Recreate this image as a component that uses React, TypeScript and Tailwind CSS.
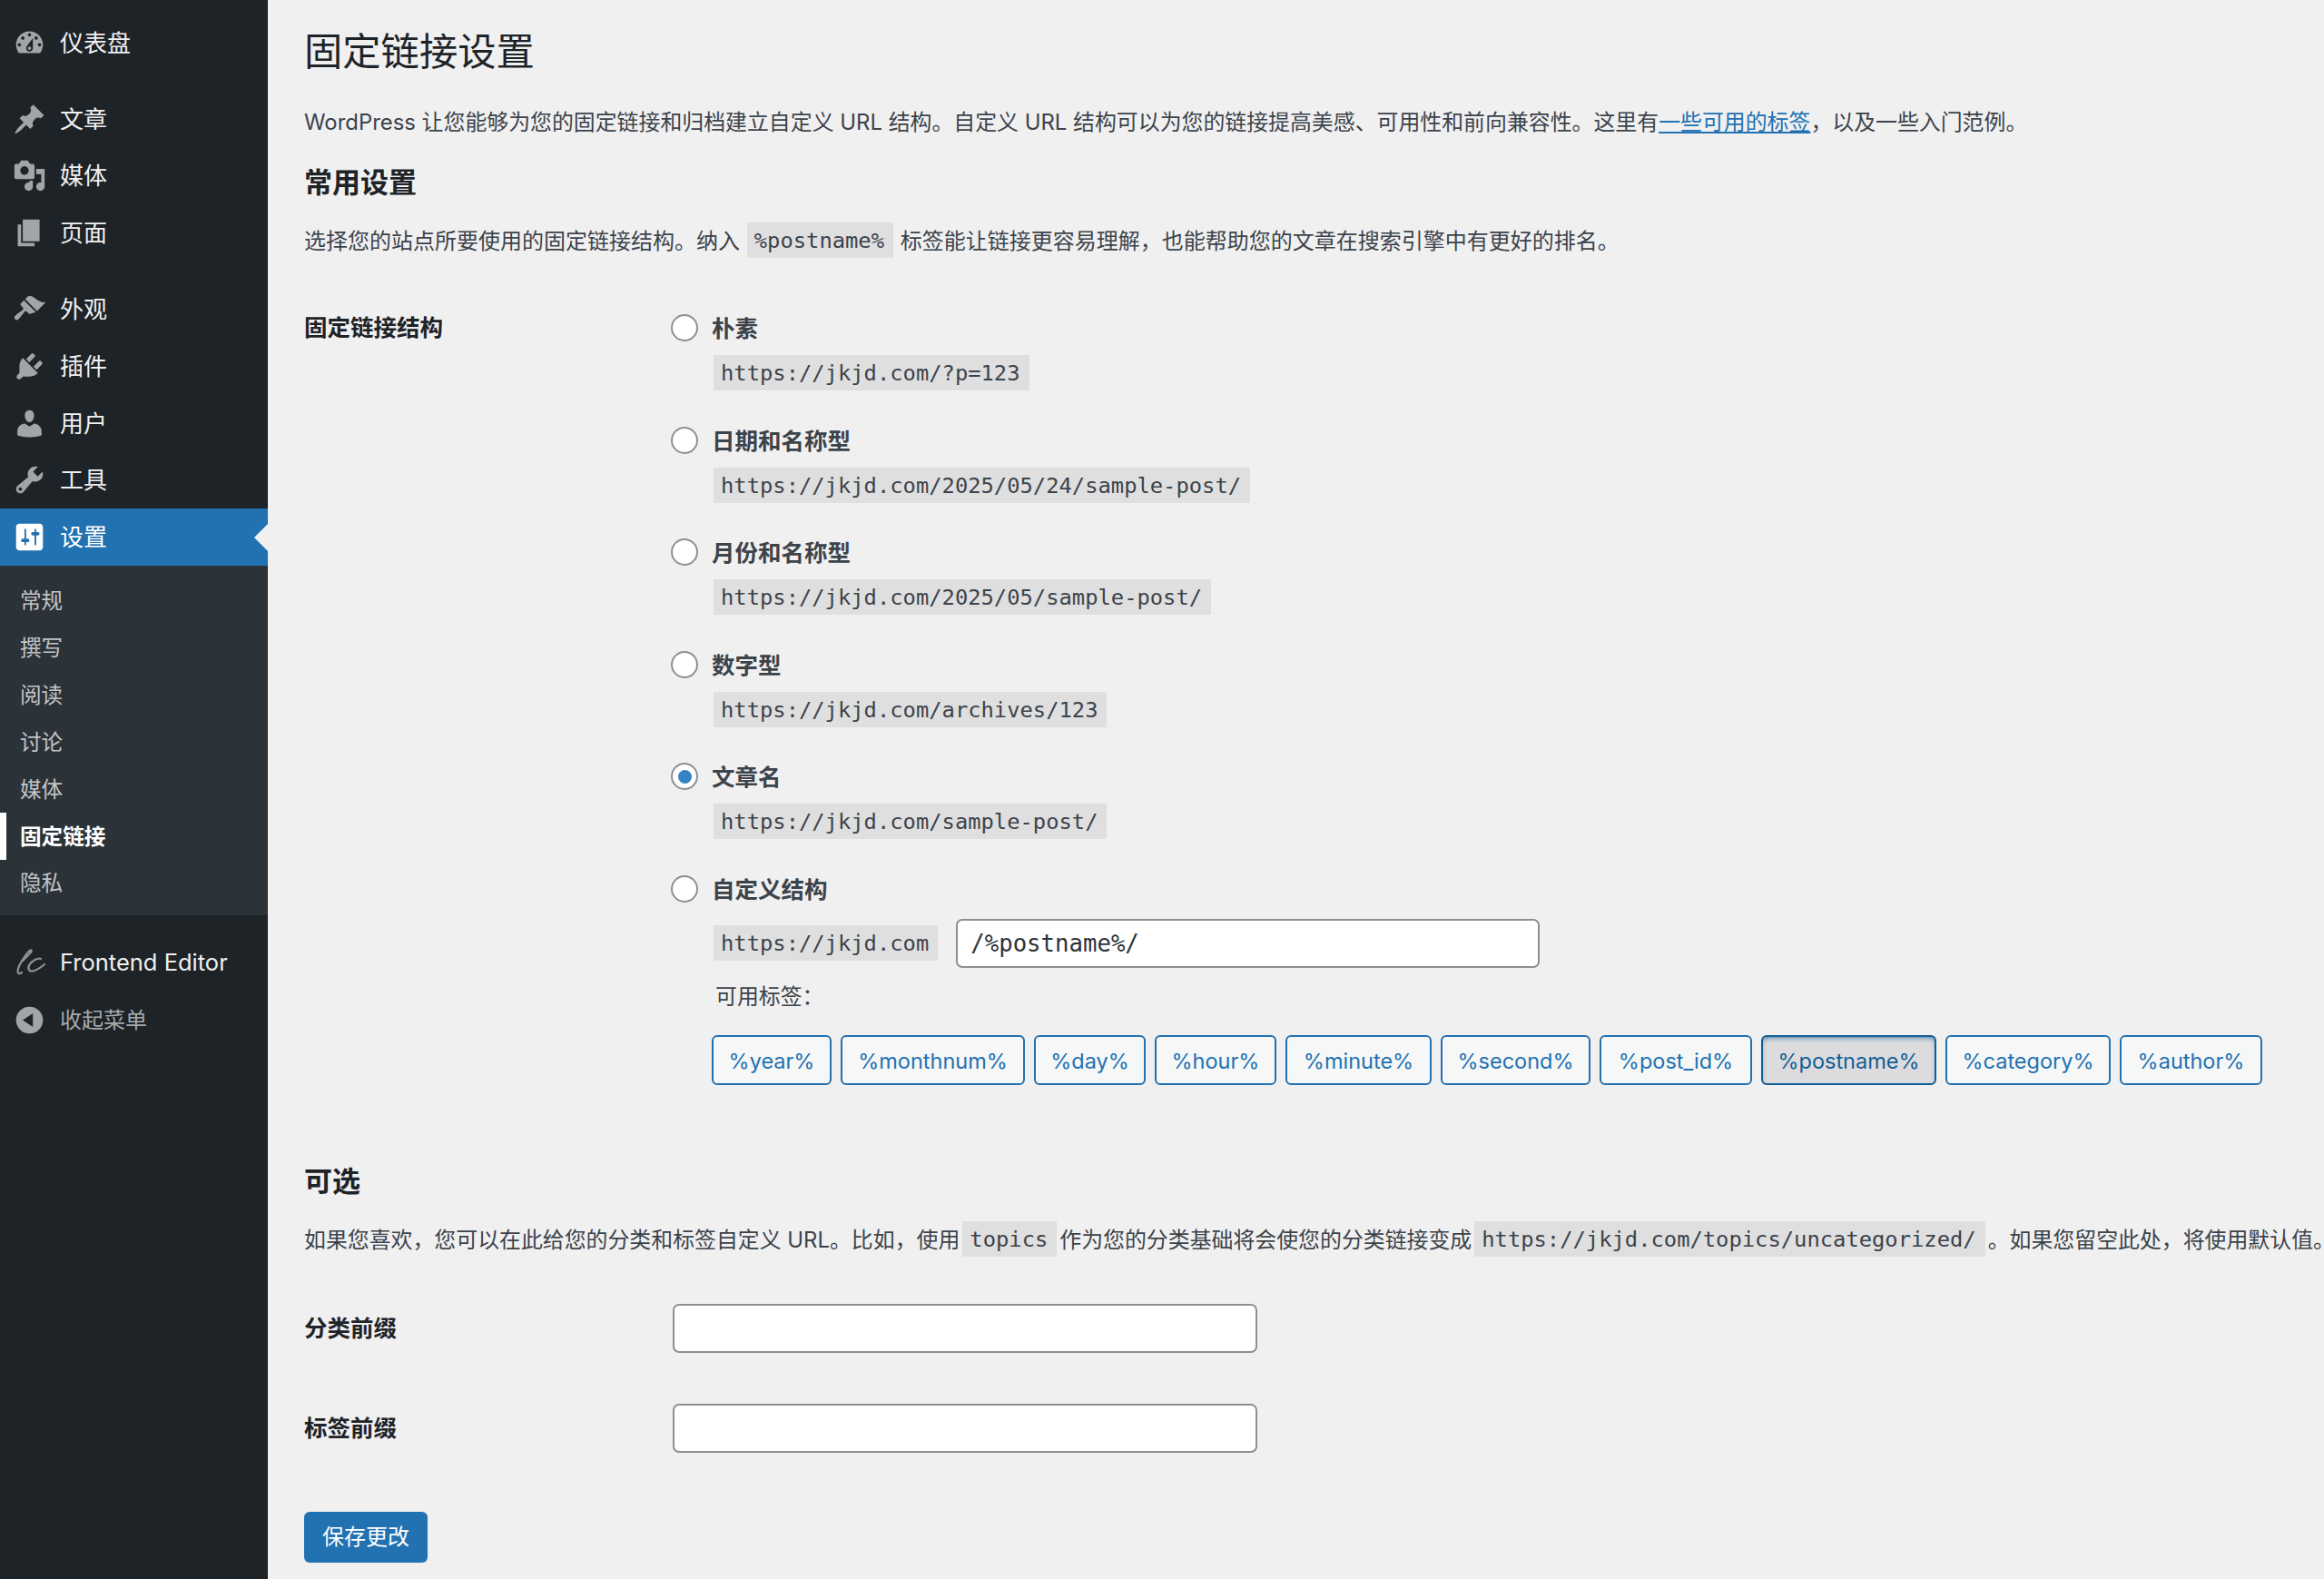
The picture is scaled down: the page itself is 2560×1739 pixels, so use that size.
import React from "react";

const FONT = "font-['Inter','Noto_Sans_CJK_SC',sans-serif]";

const icons: Record<string, string> = {
  dashboard:
    "M3.76 16h12.48c1.1-1.37 1.76-3.11 1.76-5 0-4.42-3.58-8-8-8s-8 3.58-8 8c0 1.89.66 3.63 1.76 5zM10 4c.55 0 1 .45 1 1s-.45 1-1 1-1-.45-1-1 .45-1 1-1zM6 6c.55 0 1 .45 1 1s-.45 1-1 1-1-.45-1-1 .45-1 1-1zm8 0c.55 0 1 .45 1 1s-.45 1-1 1-1-.45-1-1 .45-1 1-1zm-5.37 5.55L12 7v6c0 1.1-.9 2-2 2s-2-.9-2-2c0-.57.24-1.08.63-1.45zM4 10c.55 0 1 .45 1 1s-.45 1-1 1-1-.45-1-1 .45-1 1-1zm12 0c.55 0 1 .45 1 1s-.45 1-1 1-1-.45-1-1 .45-1 1-1zm-5 3c0-.55-.45-1-1-1s-1 .45-1 1 .45 1 1 1 1-.45 1-1z",
  post: "M10.44 3.02l1.82-1.82 6.36 6.35-1.83 1.82c-1.05-.68-2.48-.57-3.41.36l-.75.75c-.92.93-1.04 2.35-.35 3.41l-1.83 1.82-2.41-2.41-2.8 2.79c-.42.42-3.38 2.71-3.8 2.29s1.86-3.39 2.28-3.81l2.79-2.79L4.1 9.36l1.83-1.82c1.05.69 2.48.57 3.4-.36l.75-.75c.93-.92 1.05-2.35.36-3.41z",
  media:
    "M13 11V4c0-.55-.45-1-1-1h-1.67L9 1H5L3.67 3H2c-.55 0-1 .45-1 1v7c0 .55.45 1 1 1h10c.55 0 1-.45 1-1zM7 4.5c1.38 0 2.5 1.12 2.5 2.5S8.38 9.5 7 9.5 4.5 8.38 4.5 7 5.62 4.5 7 4.5zM14 6h5v10.5c0 1.38-1.12 2.5-2.5 2.5S14 17.88 14 16.5s1.12-2.5 2.5-2.5c.17 0 .34.02.5.05V9h-3V6zm-4 8.05V13h2v3.5c0 1.38-1.12 2.5-2.5 2.5S7 17.88 7 16.5 8.12 14 9.5 14c.17 0 .34.02.5.05z",
  page: "M6 15V2h10v13H6zm-1 1h8v2H3V5h2v11z",
  appearance:
    "M14.48 11.06L7.41 3.99l1.5-1.5c.5-.56 2.3-.47 3.51.32 1.21.8 1.43 1.28 2.91 2.1 1.18.64 2.45 1.26 4.45.85zm-.71.71L6.7 4.7 4.93 6.47c-.39.39-.39 1.02 0 1.41l1.06 1.06c.39.39.39 1.03 0 1.42-.6.6-1.43 1.11-2.21 1.7-.99.76-2.01 1.52-2.48 2.14-.47.62-.45 1.16.16 1.77.61.61 1.15.63 1.77.16.62-.47 1.38-1.49 2.14-2.48.59-.78 1.1-1.61 1.7-2.21.39-.39 1.03-.39 1.42 0l1.06 1.06c.39.39 1.02.39 1.41 0z",
  plugins:
    "M13.11 4.36L9.87 7.6 8 5.73l3.24-3.24c.35-.34 1.05-.2 1.56.32.52.51.66 1.21.31 1.55zm-8 1.77l.91-1.12 9.01 9.01-1.19.84c-.71.71-2.63 1.16-3.82 1.16H6.14L4.9 17.26c-.59.59-1.54.59-2.12 0-.59-.58-.59-1.53 0-2.12l1.24-1.24v-3.88c0-1.13.4-3.19 1.09-3.89zm7.26 3.97l3.24-3.24c.34-.35 1.04-.21 1.55.31.52.51.66 1.21.31 1.55l-3.24 3.25z",
  users:
    "M10 9.25c-2.27 0-2.73-3.44-2.73-3.44C7 4.02 7.82 2 9.97 2c2.16 0 2.98 2.02 2.71 3.81 0 0-.41 3.44-2.68 3.44zm0 2.57L12.72 10c2.39 0 4.52 2.33 4.52 4.53v2.49s-3.65 1.13-7.24 1.13c-3.65 0-7.24-1.13-7.24-1.13v-2.49c0-2.25 1.94-4.48 4.47-4.48z",
  tools:
    "M16.68 9.77c-1.34 1.34-3.3 1.67-4.95.99l-5.41 6.52c-.99.99-2.59.99-3.58 0s-.99-2.59 0-3.57l6.52-5.42c-.68-1.65-.35-3.61.99-4.95 1.28-1.28 3.12-1.62 4.72-1.06l-2.89 2.89 2.82 2.82 2.86-2.87c.53 1.58.18 3.39-1.08 4.65zM3.81 16.21c.4.39 1.04.39 1.43 0 .4-.4.4-1.04 0-1.43-.39-.4-1.03-.4-1.43 0-.39.39-.39 1.03 0 1.43z",
  settings:
    "M18 16V4c0-1.1-.9-2-2-2H4c-1.1 0-2 .9-2 2v12c0 1.1.9 2 2 2h12c1.1 0 2-.9 2-2zM8 11h1c.55 0 1 .45 1 1s-.45 1-1 1H8v1.5c0 .28-.22.5-.5.5s-.5-.22-.5-.5V13H6c-.55 0-1-.45-1-1s.45-1 1-1h1V5.5c0-.28.22-.5.5-.5s.5.22.5.5V11zm5-2h-1c-.55 0-1-.45-1-1s.45-1 1-1h1V5.5c0-.28.22-.5.5-.5s.5.22.5.5V7h1c.55 0 1 .45 1 1s-.45 1-1 1h-1v5.5c0 .28-.22.5-.5.5s-.5-.22-.5-.5V9z",
  collapse: "M10 2a8 8 0 100 16 8 8 0 000-16zm2 4v8l-6-4z",
};

function Icon({ name, white }: { name: string; white?: boolean }) {
  return (
    <svg
      viewBox="0 0 20 20"
      className={white ? "w-[37px] h-[37px] shrink-0 text-white" : "w-[37px] h-[37px] shrink-0 text-[#a0a5aa]"}
      fill="currentColor"
      fillRule="evenodd"
    >
      <path d={icons[name]} />
    </svg>
  );
}

function MenuItem({ icon, label }: { icon: string; label: string }) {
  return (
    <div className="h-[62.8px] flex items-center pl-[14px] text-[26px] text-[#f0f0f1]">
      <Icon name={icon} />
      <span className="ml-[15px]">{label}</span>
    </div>
  );
}

function Code({ children, cls }: { children: React.ReactNode; cls?: string }) {
  return (
    <code
      className={
        "inline-block h-[39px] leading-[41px] pl-[8px] pr-[10px] bg-[#dfdfe0] text-[23.8px] font-['DejaVu_Sans_Mono',monospace] text-[#3c434a] align-top " +
        (cls ?? "")
      }
    >
      {children}
    </code>
  );
}

function Radio({ checked }: { checked?: boolean }) {
  return (
    <span className="w-[30px] h-[30px] rounded-full border-2 border-[#8c8f94] bg-white flex items-center justify-center shrink-0">
      {checked && <span className="w-[15px] h-[15px] rounded-full bg-[#3582c4]" />}
    </span>
  );
}

function Option({ label, url, checked }: { label: string; url: string; checked?: boolean }) {
  return (
    <div className="mb-[36.6px]">
      <RadioRow label={label} checked={checked} />
      <div className="mt-[12px] pl-[47px] h-[39px]">
        <Code>{url}</Code>
      </div>
    </div>
  );
}

function RadioRow({ label, checked }: { label: string; checked?: boolean }) {
  return (
    <div className="h-[36px] flex items-center">
      <Radio checked={checked} />
      <span className="ml-[15px] pt-[2px] text-[25.5px] font-semibold text-[#3c434a] leading-[36px]">{label}</span>
    </div>
  );
}

const tags = [
  ["%year%", "w-[132px]"],
  ["%monthnum%", "w-[203px]"],
  ["%day%", "w-[123px]"],
  ["%hour%", "w-[134px]"],
  ["%minute%", "w-[161px]"],
  ["%second%", "w-[165px]"],
  ["%post_id%", "w-[168px]"],
  ["%postname%", "w-[193px]"],
  ["%category%", "w-[182px]"],
  ["%author%", "w-[157px]"],
];

export default function App() {
  return (
    <div className={"flex w-full h-[1739px] overflow-hidden bg-[#f0f0f1] " + FONT}>
      <aside className="w-[295px] shrink-0 bg-[#1d2327] pt-[16px]">
        <MenuItem icon="dashboard" label="仪表盘" />
        <div className="h-[21px]" />
        <MenuItem icon="post" label="文章" />
        <MenuItem icon="media" label="媒体" />
        <MenuItem icon="page" label="页面" />
        <div className="h-[21px]" />
        <MenuItem icon="appearance" label="外观" />
        <MenuItem icon="plugins" label="插件" />
        <MenuItem icon="users" label="用户" />
        <MenuItem icon="tools" label="工具" />
        <div className="relative h-[62.8px] flex items-center pl-[14px] text-[26px] text-white bg-[#2271b1]">
          <Icon name="settings" white />
          <span className="ml-[15px]">设置</span>
          <span className="absolute right-0 top-1/2 -translate-y-1/2 w-0 h-0 border-y-[15px] border-y-transparent border-r-[15px] border-r-[#f0f0f1]" />
        </div>
        <div className="bg-[#2c3338] pt-[13px] pb-[9px] text-[23.6px] text-[#c3c4c7]">
          {["常规", "撰写", "阅读", "讨论", "媒体"].map((s) => (
            <div key={s} className="h-[51.85px] flex items-center pl-[22px]">
              {s}
            </div>
          ))}
          <div className="relative h-[51.85px] flex items-center pl-[22px] font-semibold text-white">
            固定链接
            <span className="absolute left-0 top-0 h-full w-[7px] bg-white" />
          </div>
          <div className="h-[51.85px] flex items-center pl-[22px]">隐私</div>
        </div>
        <div className="h-[21px]" />
        <div className="h-[62.8px] flex items-center pl-[14px] text-[25.5px] text-[#f0f0f1]">
          <svg viewBox="0 0 37 37" className="w-[37px] h-[37px] shrink-0 text-[#8e9296]" fill="none" stroke="currentColor" strokeWidth="2.2" strokeLinecap="round">
            <path d="M10 17C15 12 22 6 20.5 4.5C19 3 11 13 7 22C4 29 6 32 10 29" />
            <path d="M31 14C28 12.5 21 16 18 21C16 26 19 29 24 27C27 26 33 22 35 20" />
          </svg>
          <span className="ml-[15px]">Frontend Editor</span>
        </div>
        <div className="h-[62.8px] pt-[1px] flex items-center pl-[14px] text-[24px] text-[#a7aaad]">
          <Icon name="collapse" />
          <span className="ml-[15px]">收起菜单</span>
        </div>
      </aside>

      <main className="flex-1 min-w-0 pl-[40px] pt-[28px] text-[23.9px] text-[#3c434a]">
        <h1 className="text-[42.3px] leading-[58px] font-normal text-[#1d2327]">固定链接设置</h1>
        <p className="mt-[31px] leading-[36px] whitespace-nowrap">
          WordPress 让您能够为您的固定链接和归档建立自定义 URL 结构。自定义 URL 结构可以为您的链接提高美感、可用性和前向兼容性。这里有
          <a className="text-[#2271b1] underline">一些可用的标签</a>，以及一些入门范例。
        </p>
        <h2 className="mt-[28px] text-[31px] leading-[40px] font-semibold text-[#1d2327]">常用设置</h2>
        <p className="mt-[24px] leading-[41px] h-[40px] text-[24px] whitespace-nowrap">
          选择您的站点所要使用的固定链接结构。纳入 <Code cls="mx-[1px]">%postname%</Code> 标签能让链接更容易理解，也能帮助您的文章在搜索引擎中有更好的排名。
        </p>

        <div className="mt-[58px] flex">
          <div className="w-[404px] shrink-0 text-[25.5px] leading-[36px] font-semibold text-[#1d2327]">固定链接结构</div>
          <div>
            <Option label="朴素" url="https://jkjd.com/?p=123" />
            <Option label="日期和名称型" url="https://jkjd.com/2025/05/24/sample-post/" />
            <Option label="月份和名称型" url="https://jkjd.com/2025/05/sample-post/" />
            <Option label="数字型" url="https://jkjd.com/archives/123" />
            <Option label="文章名" url="https://jkjd.com/sample-post/" checked />
            <RadioRow label="自定义结构" />
            <div className="mt-[15px] pl-[47px] flex items-center">
              <Code>https://jkjd.com</Code>
              <div className="ml-[20px] w-[643px] h-[54px] rounded-[7px] border-2 border-[#8c8f94] bg-white flex items-center pl-[14px] pt-[1px] text-[25.7px] font-['DejaVu_Sans_Mono',monospace] text-[#2c3338]">
                /%postname%/
              </div>
            </div>
            <div className="mt-[14px] pl-[49px] leading-[36px]">可用标签：</div>
            <div className="mt-[24px] pl-[45px] flex gap-[10px]">
              {tags.map(([t, w]) => {
                const active = t === "%postname%";
                return (
                  <div
                    key={t}
                    className={
                      "h-[55px] rounded-[6px] border-2 flex items-center justify-center pt-[2px] text-[23.5px] shrink-0 " +
                      w +
                      (active
                        ? " bg-[#dcdcde] border-[#135e96] text-[#135e96] shadow-[inset_0_3px_6px_-3px_#135e96]"
                        : " bg-[#f6f7f7] border-[#2271b1] text-[#2271b1]")
                    }
                  >
                    {t}
                  </div>
                );
              })}
            </div>
          </div>
        </div>

        <h2 className="mt-[86px] text-[31px] leading-[40px] font-semibold text-[#1d2327]">可选</h2>
        <p className="mt-[24px] leading-[41px] h-[40px] whitespace-nowrap">
          如果您喜欢，您可以在此给您的分类和标签自定义 URL。比如，使用<Code cls="mx-[3px]">topics</Code>作为您的分类基础将会使您的分类链接变成<Code cls="mx-[3px]">https://jkjd.com/topics/uncategorized/</Code>。如果您留空此处，将使用默认值。
        </p>
        <div className="mt-[51px] flex items-center">
          <div className="w-[406px] shrink-0 pt-[1px] text-[25.5px] font-semibold text-[#1d2327]">分类前缀</div>
          <div className="w-[644px] h-[54px] rounded-[7px] border-2 border-[#8c8f94] bg-white" />
        </div>
        <div className="mt-[56px] flex items-center">
          <div className="w-[406px] shrink-0 pt-[1px] text-[25.5px] font-semibold text-[#1d2327]">标签前缀</div>
          <div className="w-[644px] h-[54px] rounded-[7px] border-2 border-[#8c8f94] bg-white" />
        </div>
        <div className="mt-[65px] w-[136px] h-[56px] rounded-[6px] bg-[#2271b1] text-white flex items-center justify-center pt-[1px] text-[24px]">
          保存更改
        </div>
      </main>
    </div>
  );
}
